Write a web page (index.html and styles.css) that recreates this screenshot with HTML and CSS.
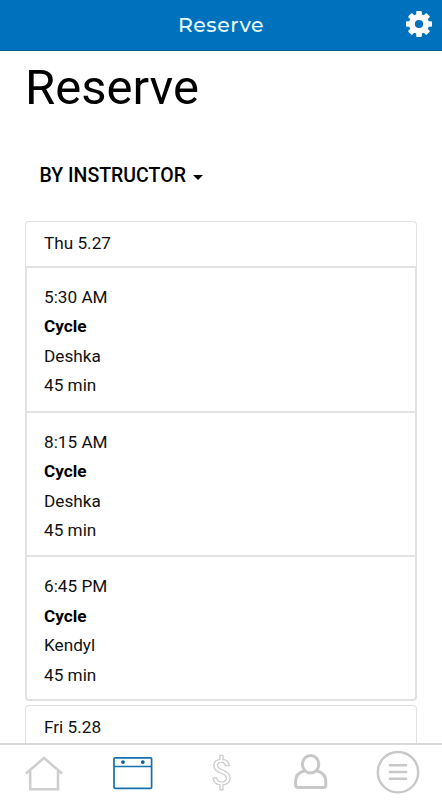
FILE: index.html
```
<!DOCTYPE html>
<html lang="en">
<head>
    <meta charset="UTF-8">
    <meta name="viewport" content="width=device-width, initial-scale=1.0">
    <title>Reserve</title>
    <link rel="stylesheet" href="styles.css">
</head>
<body>
    <header class="topbar">
        <span class="topbar-title">Reserve</span>
        <svg class="gear" viewBox="-13 -13 26 26">
            <circle r="7.1" fill="none" stroke="#fff" stroke-width="6"/>
            <g fill="#fff">
                <rect id="tooth" x="-2.8" y="-13" width="5.6" height="5" rx="1"/>
                <use href="#tooth" transform="rotate(45)"/>
                <use href="#tooth" transform="rotate(90)"/>
                <use href="#tooth" transform="rotate(135)"/>
                <use href="#tooth" transform="rotate(180)"/>
                <use href="#tooth" transform="rotate(225)"/>
                <use href="#tooth" transform="rotate(270)"/>
                <use href="#tooth" transform="rotate(315)"/>
            </g>
        </svg>
    </header>

    <main class="content">
        <h1>Reserve</h1>
        <div class="filter">BY INSTRUCTOR <span class="caret"></span></div>

        <section class="day">
            <div class="date">Thu 5.27</div>
            <div class="class-item">
                <p>5:30 AM</p>
                <p class="name">Cycle</p>
                <p>Deshka</p>
                <p>45 min</p>
            </div>
            <div class="class-item">
                <p>8:15 AM</p>
                <p class="name">Cycle</p>
                <p>Deshka</p>
                <p>45 min</p>
            </div>
            <div class="class-item">
                <p>6:45 PM</p>
                <p class="name">Cycle</p>
                <p>Kendyl</p>
                <p>45 min</p>
            </div>
        </section>
        <section class="day">
            <div class="date">Fri 5.28</div>
        </section>
    </main>

    <nav class="tabs">
        <a class="tab">
            <svg width="40" height="40" viewBox="0 0 40 40">
                <path d="M2 21.5 L20 6 L38 21.5 M6.2 18.5 V37.2 H34 V18.5"/>
            </svg>
        </a>
        <a class="tab active">
            <svg width="40" height="40" viewBox="0 0 40 40">
                <rect x="1" y="5.8" width="37.6" height="30.5" rx="1"/>
                <path d="M1 14.5 H38.6"/>
                <circle class="dot" cx="10" cy="10.1" r="1.9"/>
                <circle class="dot" cx="29.8" cy="10.1" r="1.9"/>
            </svg>
        </a>
        <a class="tab dollar">
            <svg width="40" height="40" viewBox="0 0 40 40">
                <path d="M19 7.4 V3.4 H22 V7.4 C25.6 8 27.9 10.2 28.2 13.6 H24.5 C24 11.4 22.6 10.4 20.5 10.4 C18 10.4 16.4 11.6 16.4 13.6 C16.4 15.5 17.6 16.4 20.9 17.7 C26 19.6 29.1 21.6 29.1 25.9 C29.1 29.8 26.4 32.3 22 32.9 V37.8 H19 V32.9 C14.8 32.4 12.3 29.9 12.1 26 H15.8 C16.1 28.6 17.8 29.9 20.5 29.9 C23.6 29.9 25.4 28.4 25.4 26 C25.4 23.6 23.7 22.6 19.8 21.1 C15.2 19.3 12.8 17.5 12.8 13.7 C12.8 10.4 15.3 8 19 7.4 Z"/>
            </svg>
        </a>
        <a class="tab person">
            <svg width="40" height="40" viewBox="0 0 40 40">
                <ellipse cx="21.6" cy="12.2" rx="8.2" ry="8.8"/>
                <path d="M15.8 18.8 C9.4 20.3 6.6 24 6.6 29.5 V32.9 Q6.6 35.4 9.1 35.4 H34.3 Q36.8 35.4 36.8 32.9 V29.5 C36.8 24 33.7 20.3 27.4 18.8"/>
            </svg>
        </a>
        <a class="tab menu">
            <svg width="44" height="44" viewBox="0 0 44 44">
                <circle cx="22" cy="22.2" r="20.2"/>
                <path d="M13.8 15.2 H30.2 M13.8 22 H30.2 M13.8 28.8 H30.2"/>
            </svg>
        </a>
    </nav>
</body>
</html>
```
FILE: styles.css
```
* {
    box-sizing: border-box;
}
body {
    display: flex;
    flex-direction: column;
    height: 100vh;
    margin: 0;
    overflow: hidden;
    font-family: Roboto, sans-serif;
    font-size: 17.2px;
    color: #111;
    background-color: #fff;
}
.topbar {
    display: grid;
    grid-template-columns: 1fr auto 1fr;
    align-items: center;
    flex: none;
    height: 51px;
    padding: 0 10px;
    background-color: #0071bc;
    border-bottom: 1px solid #005a94;
    color: #e6fbff;
}
.topbar-title {
    grid-column: 2;
    font-family: Montserrat, Inter, sans-serif;
    font-size: 20.5px;
    font-weight: 500;
    letter-spacing: 0.5px;
    line-height: 50px;
}
.gear {
    justify-self: end;
    width: 26px;
    height: 26px;
    margin-bottom: 2px;
}
.content {
    flex: 1;
    min-height: 0;
    overflow: hidden;
    padding: 0 25px;
}
h1 {
    margin: 7px 0 0;
    font-size: 49px;
    font-weight: 400;
    line-height: 60px;
    color: #000;
}
.filter {
    display: flex;
    align-items: center;
    gap: 7px;
    margin: 43px 0 30px 14.5px;
    font-size: 19.5px;
    font-weight: 500;
    line-height: 30px;
    color: #000;
}
.caret {
    margin-top: 2px;
    border-top: 5px solid #000;
    border-left: 5px solid transparent;
    border-right: 5px solid transparent;
}
.day {
    margin-bottom: 4px;
}
.date {
    height: 45px;
    padding-left: 18px;
    border: 1px solid #e2e2e2;
    border-bottom: none;
    border-radius: 4px 4px 0 0;
    line-height: 43px;
}
.class-item {
    height: 144.7px;
    padding: 15px 0 0 17px;
    border: 2px solid #e2e2e2;
    border-bottom: none;
}
.class-item:last-child {
    height: 145.6px;
    border-bottom: 2px solid #e2e2e2;
    border-radius: 0 0 4px 4px;
}
.class-item p {
    margin: 0;
    line-height: 29.4px;
}
.class-item .name {
    font-weight: 700;
    font-size: 17.2px;
    color: #000;
}
.tabs {
    display: grid;
    grid-template-columns: repeat(5, 1fr);
    flex: none;
    height: 57px;
    padding-bottom: 2px;
    border-top: 2px solid #dadada;
    background-color: #fff;
}
.tab {
    display: flex;
    justify-content: center;
    align-items: center;
}
.tab svg {
    fill: none;
    stroke: #cfcfcf;
    stroke-width: 2.6;
}
.tab.active svg {
    stroke: #1770ae;
    stroke-width: 1.7;
}
.tab.active .dot {
    fill: #0f5f99;
    stroke: none;
}
.tab.dollar svg {
    stroke-width: 1.4;
}
.tab.person svg {
    stroke: #c8c8c8;
    stroke-width: 3;
}
.tab.menu svg {
    stroke: #c8c8c8;
    stroke-width: 2.4;
    stroke-linecap: round;
}
```
